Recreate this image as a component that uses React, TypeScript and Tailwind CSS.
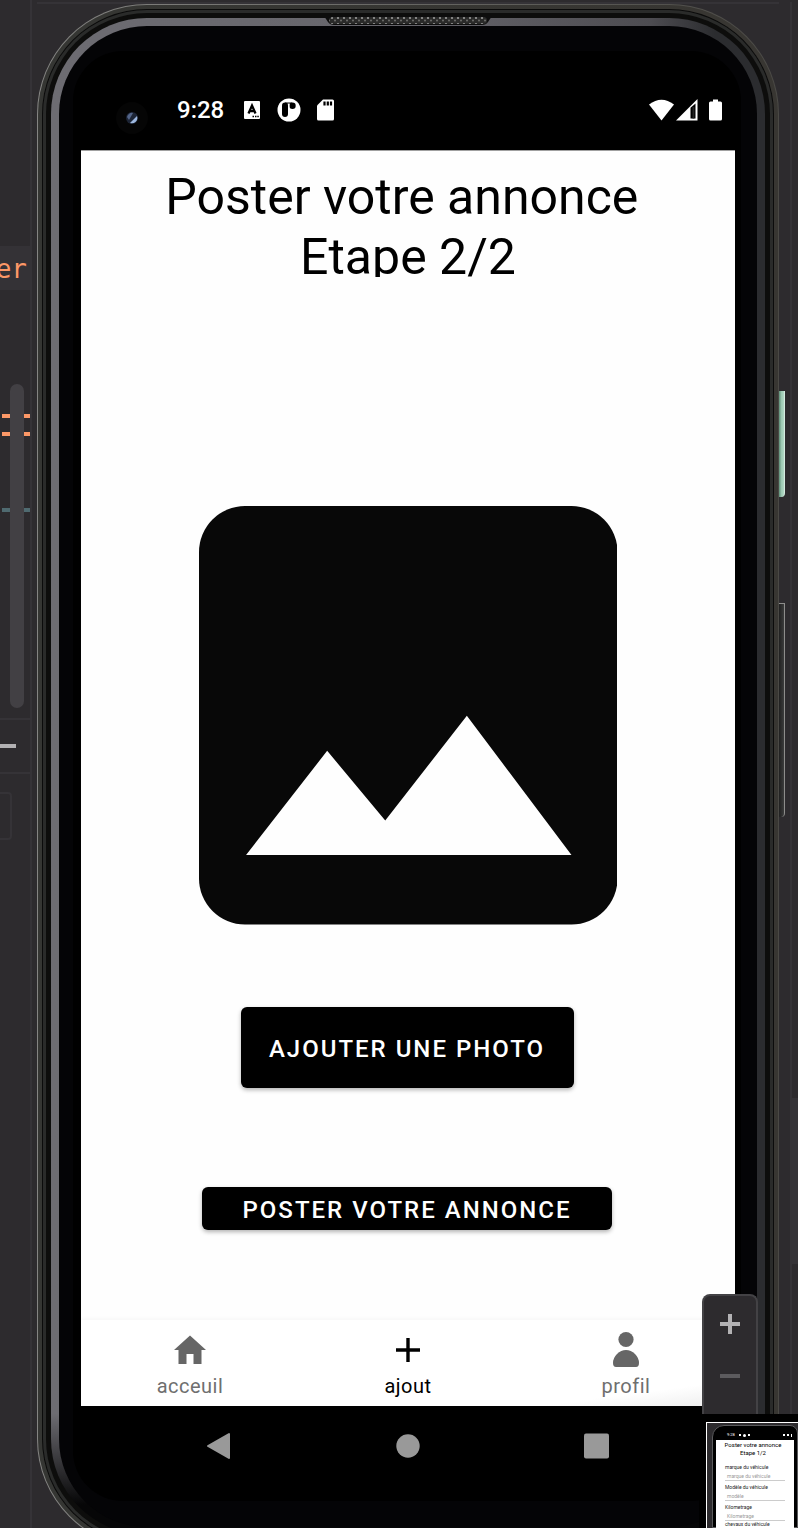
import React from "react";

function EditorSliver() {
  return (
    <aside className="flex w-[37px] shrink-0 flex-col" aria-label="Éditeur">
      <div className="relative flex w-8 flex-1 flex-col border-r-2 border-[#353337]">
        <div className="h-[246px]" />
        <div className="flex h-11 items-center justify-end overflow-hidden bg-[#343236] pr-[3px] pt-0.5 font-['DejaVu_Sans_Mono',monospace] text-[26px] leading-none text-[#fc9867]">
          er
        </div>
        <div className="h-[124px]" />
        <div className="ml-0.5 h-1 bg-[#fc9867]" />
        <div className="h-[14px]" />
        <div className="ml-0.5 h-1 bg-[#fc9867]" />
        <div className="h-[72px]" />
        <div className="ml-0.5 h-1 bg-[#4f6a70]" />
        <div className="h-[206px]" />
        <div className="flex h-14 items-center border-y-2 border-[#353337]">
          <div className="h-1 w-4 bg-[#b2b1b3]" />
        </div>
        <div className="mt-[18px] h-12 w-3 rounded-r-sm border-2 border-l-0 border-[#353337]" />
        <div className="absolute left-[10px] top-[384px] h-[324px] w-[14px] rounded-full bg-[#424044]" />
      </div>
    </aside>
  );
}

function RightGutter() {
  return (
    <div className="flex w-[19px] shrink-0 border-t-2 border-[#2d2b2e]">
      <div className="flex w-[11px] flex-col">
        <div className="h-[389px]" />
        <div className="h-[106px] w-1.5 rounded-br-sm border-r border-[#d5ebe0] bg-linear-to-r from-[#5f8f78] via-[#9dc9b3] to-[#b3d9c6]" />
        <div className="h-[106px]" />
        <div className="h-[214px] w-1.5 rounded-br-sm border-r border-t border-[#8d8d8b] bg-linear-to-r from-[#202020] to-[#3b3c3c]" />
      </div>
      <div className="flex flex-1 flex-col border-l-2 border-[#353337]">
        <div className="h-[1096px]" />
        <div className="h-[166px] bg-[#353337]" />
      </div>
    </div>
  );
}

function Speaker() {
  return (
    <svg className="absolute left-1/2 top-3 -translate-x-1/2" width="168" height="10" viewBox="0 0 168 10" aria-hidden="true">
      <defs>
        <pattern id="mesh" width="6" height="6" patternUnits="userSpaceOnUse">
          <circle cx="2" cy="2" r="1.1" fill="#9a9a98" />
          <circle cx="5" cy="4.500" r="1" fill="#6d6d6b" />
        </pattern>
      </defs>
      <path d="M0 0H168L164 6Q162 9 158 9H10Q6 9 4 6Z" fill="#0d0d0d" />
      <rect x="5" y="1" width="158" height="7" rx="3.500" fill="#2a2a29" />
      <rect x="5" y="1" width="158" height="7" rx="3.500" fill="url(#mesh)" />
    </svg>
  );
}

function StatusBar() {
  return (
    <div className="flex h-[99px] items-center pl-[34px] pr-[13px] pt-[18px] text-white">
      <svg width="34" height="50" viewBox="0 0 34 50" aria-hidden="true">
        <circle cx="17" cy="33" r="16" fill="#050505" />
        <circle cx="17" cy="33" r="6" fill="#1c2435" />
        <path d="M12 32a5 5 0 0 1 6-4l-4 7z" fill="#526488" />
        <path d="M22 31a5.500 5.500 0 0 1-7 7z" fill="#9db8e0" />
      </svg>
      <span className="ml-7 w-[46px] text-2xl font-medium leading-8">9:28</span>
      <svg className="ml-[21px]" width="16" height="18" viewBox="0 0 16 18" aria-hidden="true">
        <rect width="16" height="18" rx="1" fill="#fff" />
        <path d="M4.500 12.500 8 4.500l3.500 8M5.700 10.200h4.600" fill="none" stroke="#000" strokeWidth="2.300" />
        <path d="M8.500 15.500h1.500M11 15.500h1.500M13.300 15.500h1.500" stroke="#000" strokeWidth="1.400" />
      </svg>
      <svg className="ml-[17px]" width="24" height="24" viewBox="0 0 24 24" aria-hidden="true">
        <circle cx="12" cy="12" r="11.500" fill="#fff" />
        <rect x="5" y="4.500" width="6" height="14.500" rx="3" fill="#000" />
        <circle cx="15.500" cy="7.800" r="3.200" fill="#000" />
        <path d="M8 4.500h7v1.200h-7z" fill="#000" />
        <path d="M11 5.700h1.500v5H11z" fill="#fff" />
      </svg>
      <svg className="ml-4" width="17" height="22" viewBox="0 0 17 22" aria-hidden="true">
        <path d="M6 0.500H15.500Q17 .5 17 2V20Q17 21.500 15.500 21.500H1.500Q0 21.500 0 20V6.500Z" fill="#fff" />
        <path d="M7.500 2.500V6.500M10.800 2.500V6.500M14 2.500V6.500" stroke="#000" strokeWidth="2.200" />
      </svg>
      <svg className="ml-auto" width="25" height="22" viewBox="0 0 25 22" aria-hidden="true">
        <path d="M12.500 21.500 0 5.500Q12.500-4 25 5.500Z" fill="#fff" />
      </svg>
      <svg className="ml-0.5" width="22" height="22" viewBox="0 0 22 22" aria-hidden="true">
        <path d="M0 21.500 21.500 0V21.500Z" fill="#fff" />
        <path d="M14.500 8.800 19.500 4.500V19.500H14.500Z" fill="#000" />
        <path d="M16.500 8H18.300V19.500H16.500Z" fill="#222" />
      </svg>
      <svg className="ml-[11px]" width="13" height="22" viewBox="0 0 13 22" aria-hidden="true">
        <path d="M4 0.500H9V2.500H11.500Q13 2.500 13 4V20Q13 21.500 11.500 21.500H1.500Q0 21.500 0 20V4Q0 2.500 1.500 2.500H4Z" fill="#fff" />
      </svg>
    </div>
  );
}

function BottomNav() {
  const item = "flex flex-1 flex-col items-center pt-2.5 text-xl leading-6 tracking-wide";
  return (
    <nav className="flex h-[86px] bg-linear-to-br from-white from-85% to-[#ededed] shadow-[0_-1px_4px_rgba(0,0,0,0.04)]">
      <a href="#acceuil" className={`${item} text-[#6f6f6f]`}>
        <svg width="32" height="40" viewBox="0 0 32 40" aria-hidden="true">
          <path d="M16 5.500 32 20H27.500V34H19.500V24H12.500V34H4.500V20H0Z" fill="#666" />
        </svg>
        <span className="block pt-1">acceuil</span>
      </a>
      <a href="#ajout" aria-current="page" className={`${item} text-black`}>
        <svg width="32" height="40" viewBox="0 0 32 40" aria-hidden="true">
          <path d="M16 8V32M4 20H28" stroke="#000" strokeWidth="3.400" />
        </svg>
        <span className="block pt-1">ajout</span>
      </a>
      <a href="#profil" className={`${item} text-[#6f6f6f]`}>
        <svg width="32" height="40" viewBox="0 0 32 40" aria-hidden="true">
          <circle cx="16" cy="9.500" r="7.600" fill="#666" />
          <path d="M3 33Q3 28 7 24Q11 20 16 20T25 24Q29 28 29 33Q29 37 26 37H6Q3 37 3 33Z" fill="#666" />
        </svg>
        <span className="block pt-1">profil</span>
      </a>
    </nav>
  );
}

function Screen() {
  const button =
    "rounded-md bg-black pt-1 text-2xl font-medium tracking-[2px] text-white shadow-[0_2px_4px_rgba(0,0,0,0.3)]";
  return (
    <div className="flex flex-col items-center border-t border-[#a0a0a0] bg-[#fefefe]">
      <h1 className="mt-4 h-[110px] overflow-hidden text-center text-[50px] leading-[60px] text-black">
        Poster votre annonce&nbsp;
        <br />
        Etape 2/2
      </h1>
      <svg className="mt-[229px] aspect-square w-[64%]" viewBox="0 0 418 418" role="img" aria-label="Photo du véhicule">
        <rect width="418" height="418" rx="46" fill="#080808" />
        <path d="M47 348.500 128 244.500 186 314 267.500 209.500 372 348.500Z" fill="#fefefe" />
      </svg>
      <div className="flex flex-col items-center pb-[90px] pr-0.5 pt-[82px]">
        <button type="button" className={`${button} h-[81px] w-[333px]`}>
          AJOUTER UNE PHOTO
        </button>
        <button type="button" className={`${button} mt-[99px] h-[43px] w-[410px]`}>
          POSTER VOTRE ANNONCE
        </button>
      </div>
      <div className="w-full">
        <BottomNav />
      </div>
    </div>
  );
}

function SystemBar() {
  return (
    <div className="flex h-[95px] items-start justify-center gap-[157px] pt-6">
      <button type="button" aria-label="Retour">
        <svg width="32" height="32" viewBox="0 0 32 32" aria-hidden="true">
          <path d="M26 4V28L5 16Z" fill="#999" stroke="#999" strokeWidth="2" strokeLinejoin="round" />
        </svg>
      </button>
      <button type="button" aria-label="Accueil">
        <svg width="32" height="32" viewBox="0 0 32 32" aria-hidden="true">
          <circle cx="16" cy="16" r="11.700" fill="#999" />
        </svg>
      </button>
      <button type="button" aria-label="Applications">
        <svg width="32" height="32" viewBox="0 0 32 32" aria-hidden="true">
          <rect x="3" y="3.500" width="25" height="25" rx="2" fill="#999" />
        </svg>
      </button>
    </div>
  );
}

function Phone() {
  return (
    <div className="relative rounded-[110px] bg-linear-to-r from-[#858583] to-[#4a4945] p-px">
      <div className="rounded-[109px] bg-linear-to-r from-[#353633] to-[#383632] p-1">
        <div className="rounded-[105px] bg-[#0b0b0b] p-px">
          <div className="rounded-[104px] bg-[#2a2b2a] p-[3px]">
            <div className="rounded-[101px] bg-[#0d0d0c] p-[5px]">
              <div className="rounded-[96px] bg-[linear-gradient(to_bottom,transparent_92%,#060607_98%),linear-gradient(to_right,#6d6c72,#66656b_50%,#4d4c51_84%,#2b2c2f_93%)] p-2">
                <div className="rounded-[88px] bg-[#040406] pb-[26px] pl-[14px] pr-4 pt-[25px]">
                  <div className="rounded-[50px] bg-black pl-2 pr-1.5">
                    <StatusBar />
                    <Screen />
                    <SystemBar />
                  </div>
                </div>
              </div>
            </div>
          </div>
        </div>
      </div>
      <Speaker />
    </div>
  );
}

function PreviewField({ label, hint }: { label: string; hint: string }) {
  return (
    <div className="mt-[3px]">
      <p className="leading-[7px] text-[#222]">{label}</p>
      <p className="mt-0.5 border-b border-[#ccc] pl-0.5 leading-[7px] text-[#999]">{hint}</p>
    </div>
  );
}

function FloatingTools() {
  return (
    <div className="absolute bottom-0 right-0 flex h-[234px] w-[99px] flex-col">
      <div className="ml-[3px] flex h-[120px] w-14 shrink-0 flex-col items-center rounded-t-lg border-2 border-b-0 border-[#434245] bg-[#2d2b2e]">
        <button type="button" aria-label="Zoom avant" className="mt-[18px]">
          <svg width="20" height="20" viewBox="0 0 20 20" aria-hidden="true">
            <path d="M10 0V20M0 10H20" stroke="#b3b2b4" strokeWidth="4" />
          </svg>
        </button>
        <button type="button" aria-label="Zoom arrière" className="mt-8">
          <svg width="20" height="20" viewBox="0 0 20 20" aria-hidden="true">
            <path d="M0 10H20" stroke="#5c5b5e" strokeWidth="4" />
          </svg>
        </button>
      </div>
      <div className="min-h-0 flex-1 bg-black pl-[7px] pt-2">
        <div className="h-full overflow-hidden border-l border-t border-white bg-[#2d2b2e] pl-[5px] pt-0.5">
          <div className="h-full rounded-tl-xl rounded-tr-lg border border-[#5a5a5c] bg-black px-[3px]">
            <div className="flex h-[14px] items-center gap-0.5 pl-[11px] pr-0.5 pt-1">
              <span className="mr-0.5 text-[4px] leading-none text-white">9:28</span>
              <span className="size-0.5 bg-white" />
              <span className="size-[3px] rounded-full bg-white" />
              <span className="size-0.5 bg-white" />
              <span className="ml-auto size-0.5 bg-white" />
              <span className="size-0.5 bg-white" />
              <span className="h-[3px] w-px bg-white" />
            </div>
            <div className="h-full bg-white px-[9px] pt-px text-[5px]">
              <p className="-mx-1 whitespace-nowrap pr-1 text-center text-[6px] leading-2 text-black">
                Poster votre annonce
                <br />
                Etape 1/2
              </p>
              <div className="pt-1">
                <PreviewField label="marque du véhicule" hint="marque du véhicule" />
                <PreviewField label="Modèle du véhicule" hint="modèle" />
                <PreviewField label="Kilometrage" hint="Kilometrage" />
                <p className="leading-[7px] text-[#222]">chevaux du véhicule</p>
              </div>
            </div>
          </div>
        </div>
      </div>
    </div>
  );
}

export default function App() {
  return (
    <main className="relative flex h-screen overflow-hidden bg-[#2d2b2e] font-[Roboto,sans-serif]">
      <EditorSliver />
      <div className="mt-0.5 min-w-0 flex-1 border-t-2 border-[#353337]">
        <Phone />
      </div>
      <RightGutter />
      <FloatingTools />
    </main>
  );
}
